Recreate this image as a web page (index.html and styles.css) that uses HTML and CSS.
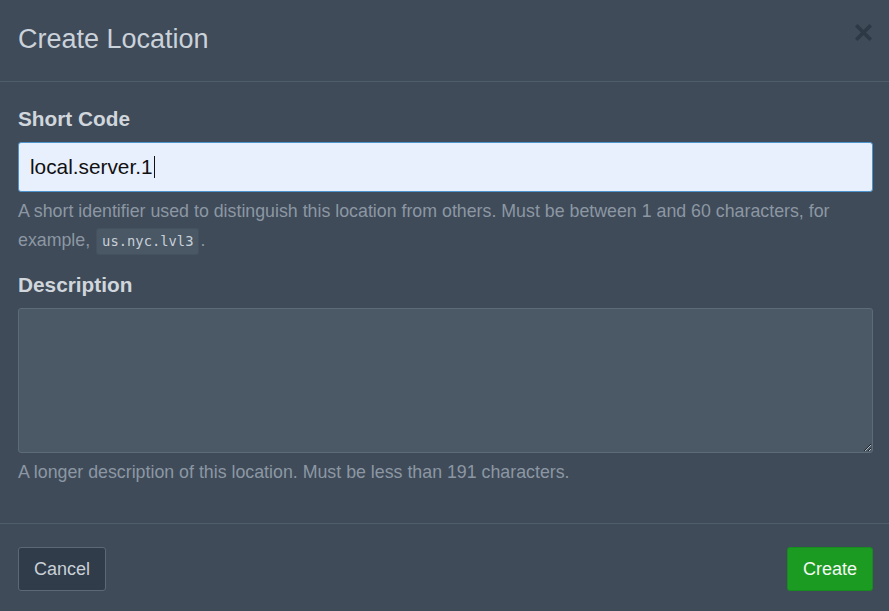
FILE: index.html
```html
<!DOCTYPE html>
<html lang="en">
<head>
<meta charset="utf-8">
<title>Create Location</title>
<link rel="stylesheet" href="styles.css">
</head>
<body>
<div class="modal">
  <header class="modal-header">
    <h1 class="modal-title">Create Location</h1>
    <button class="close" type="button" aria-label="Close">
      <svg width="17" height="17" viewBox="0 0 17 17"><path d="M2.5 2.5 L14.5 14.5 M14.5 2.5 L2.5 14.5" stroke="#2d3945" stroke-width="3.6" stroke-linecap="square" fill="none"/></svg>
    </button>
  </header>
  <div class="modal-body">
    <div class="group">
      <label class="label" for="code">Short Code</label>
      <div class="input"><span class="input-text">local.server.1</span><span class="caret"></span></div>
      <p class="help">A short identifier used to distinguish this location from others. Must be between 1 and 60 characters, for example, <code class="code">us.nyc.lvl3</code>.</p>
    </div>
    <div class="group">
      <label class="label" for="desc">Description</label>
      <textarea class="textarea" id="desc"></textarea>
      <p class="help">A longer description of this location. Must be less than 191 characters.</p>
    </div>
  </div>
  <footer class="modal-footer">
    <button class="btn btn-secondary" type="button">Cancel</button>
    <button class="btn btn-primary" type="button">Create</button>
  </footer>
</div>
</body>
</html>
```

FILE: styles.css
```css
html, body {
  margin: 0;
  padding: 0;
  background: #3f4b59;
  font-family: "Liberation Sans", Arial, sans-serif;
}

.modal {
  width: 889px;
  height: 611px;
  display: flex;
  flex-direction: column;
}

.modal-header {
  height: 82px;
  box-sizing: border-box;
  border-bottom: 1px solid #4f5c69;
  padding: 0 17px 0 18px;
  display: flex;
  align-items: center;
  justify-content: space-between;
}

.modal-title {
  margin: 0;
  font-size: 27px;
  font-weight: normal;
  color: #cbd2d9;
  line-height: 32px;
  padding-bottom: 3px;
}

.close {
  background: none;
  border: 0;
  padding: 0;
  margin-bottom: 17px;
  width: 17px;
  height: 17px;
  display: flex;
}

.modal-body {
  padding: 25px 16px 0 18px;
  height: 442px;
  box-sizing: border-box;
  border-bottom: 1px solid #4f5c69;
}

.group + .group {
  margin-top: 18px;
}

.label {
  display: block;
  font-size: 20.8px;
  font-weight: bold;
  color: #d0d6dc;
  line-height: 24px;
  margin-bottom: 11px;
}

.input {
  height: 50px;
  box-sizing: border-box;
  border: 1px solid #4d93cc;
  border-radius: 3px;
  background: #e8f0fe;
  padding: 0 11px;
  display: flex;
  align-items: center;
  font-size: 20.8px;
  color: #111;
}

.caret {
  display: inline-block;
  width: 1px;
  height: 22px;
  background: #111;
  margin-left: 1px;
}

.help {
  margin: 5px 0 0;
  font-size: 17.8px;
  line-height: 29px;
  color: #8c97a3;
}

.code {
  display: inline-block;
  font-family: "DejaVu Sans Mono", monospace;
  font-size: 13.8px;
  line-height: 17px;
  color: #c8d0d8;
  background: #4a5765;
  border: 1px solid #44515e;
  border-radius: 3px;
  padding: 4px 5px;
  margin: 0 1px;
}

.textarea {
  display: block;
  width: 100%;
  height: 145px;
  box-sizing: border-box;
  margin: 0;
  background: #4b5866;
  border: 1px solid #5d6a77;
  border-radius: 3px;
  color: #d0d6dc;
  font-family: inherit;
  font-size: 16px;
}

.modal-footer {
  flex: 1;
  display: flex;
  justify-content: space-between;
  align-items: flex-start;
  padding: 23px 16px 0 18px;
}

.btn {
  height: 44px;
  box-sizing: border-box;
  padding: 0 15px;
  font-family: inherit;
  font-size: 18px;
  border-radius: 3px;
  border: 1px solid;
}

.btn-secondary {
  background: #303c49;
  border-color: #5c6875;
  color: #c9d0d7;
}

.btn-primary {
  background: #1b9b22;
  border-color: #178c1e;
  color: #f4f8f4;
}
```
